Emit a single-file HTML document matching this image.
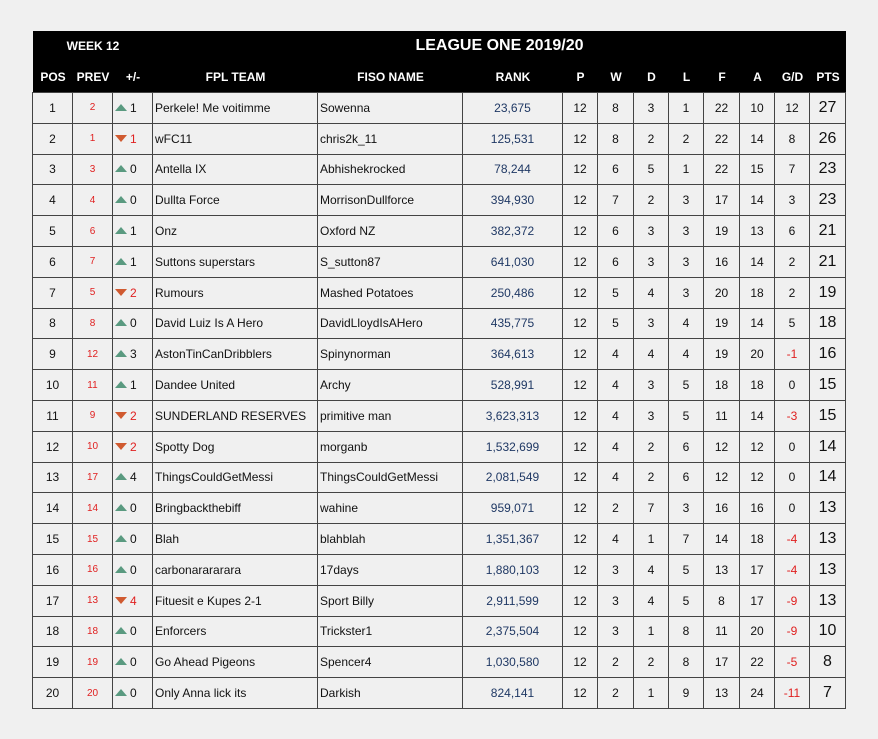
<!DOCTYPE html>
<html><head><meta charset="utf-8"><style>
html,body{margin:0;padding:0;background:#f0f0f0;width:878px;height:739px;overflow:hidden}
body{font-family:"Liberation Sans",Arial,sans-serif;}
.wrap{position:absolute;left:33px;top:31px;width:813px;}
.hd{background:#000;color:#fff;height:61px;position:relative;font-weight:bold;}
.hd div{position:absolute;font-size:12px;text-align:center}
table{border-collapse:collapse;table-layout:fixed;width:814px;position:absolute;left:32px;top:92px}
td{border:1px solid #444;height:29.8px;padding:0;font-size:12px;text-align:center;color:#111;background:#f0f0f0;white-space:nowrap;overflow:hidden}
td.t{text-align:left;padding-left:2px}
td.pr{color:#e02020;font-size:10px}
td.rk{color:#1f3864}
td.pts{font-size:16px}
td.neg{color:#e02020}
.up,.dn{display:inline-block;width:0;height:0;border-left:6px solid transparent;border-right:6px solid transparent;margin-right:3px;vertical-align:1px}
.up{border-bottom:7px solid #5a9a80}
.dn{border-top:7px solid #d05a30}
td.ch{text-align:left;padding-left:2px}
td.ch.r{color:#e02020}
</style></head><body>
<div class="wrap"><div class="hd">
<div style="left:20px;top:8px;width:80px">WEEK 12</div>
<div style="left:350px;top:6px;width:233px;font-size:16px">LEAGUE ONE 2019/20</div>
<div style="left:0;top:39px;width:40px">POS</div>
<div style="left:40px;top:39px;width:40px">PREV</div>
<div style="left:80px;top:39px;width:40px">+/-</div>
<div style="left:120px;top:39px;width:165px">FPL TEAM</div>
<div style="left:285px;top:39px;width:145px">FISO NAME</div>
<div style="left:430px;top:39px;width:100px">RANK</div>
<div style="left:530px;top:39px;width:35px">P</div>
<div style="left:565px;top:39px;width:36px">W</div>
<div style="left:601px;top:39px;width:35px">D</div>
<div style="left:636px;top:39px;width:35px">L</div>
<div style="left:671px;top:39px;width:36px">F</div>
<div style="left:707px;top:39px;width:35px">A</div>
<div style="left:742px;top:39px;width:35px">G/D</div>
<div style="left:777px;top:39px;width:36px">PTS</div>
</div></div>
<table>
<colgroup><col style="width:40px"><col style="width:40px"><col style="width:40px"><col style="width:165px"><col style="width:145px"><col style="width:100px"><col style="width:35px"><col style="width:36px"><col style="width:35px"><col style="width:35px"><col style="width:36px"><col style="width:35px"><col style="width:35px"><col style="width:36px"></colgroup>
<tbody id="b"></tbody></table>
<script>
var d=[
[1,2,"u",1,"Perkele! Me voitimme","Sowenna","23,675",8,3,1,22,10,12,27],
[2,1,"d",1,"wFC11","chris2k_11","125,531",8,2,2,22,14,8,26],
[3,3,"u",0,"Antella IX","Abhishekrocked","78,244",6,5,1,22,15,7,23],
[4,4,"u",0,"Dullta Force","MorrisonDullforce","394,930",7,2,3,17,14,3,23],
[5,6,"u",1,"Onz","Oxford NZ","382,372",6,3,3,19,13,6,21],
[6,7,"u",1,"Suttons superstars","S_sutton87","641,030",6,3,3,16,14,2,21],
[7,5,"d",2,"Rumours","Mashed Potatoes","250,486",5,4,3,20,18,2,19],
[8,8,"u",0,"David Luiz Is A Hero","DavidLloydIsAHero","435,775",5,3,4,19,14,5,18],
[9,12,"u",3,"AstonTinCanDribblers","Spinynorman","364,613",4,4,4,19,20,-1,16],
[10,11,"u",1,"Dandee United","Archy","528,991",4,3,5,18,18,0,15],
[11,9,"d",2,"SUNDERLAND RESERVES","primitive man","3,623,313",4,3,5,11,14,-3,15],
[12,10,"d",2,"Spotty Dog","morganb","1,532,699",4,2,6,12,12,0,14],
[13,17,"u",4,"ThingsCouldGetMessi","ThingsCouldGetMessi","2,081,549",4,2,6,12,12,0,14],
[14,14,"u",0,"Bringbackthebiff","wahine","959,071",2,7,3,16,16,0,13],
[15,15,"u",0,"Blah","blahblah","1,351,367",4,1,7,14,18,-4,13],
[16,16,"u",0,"carbonarararara","17days","1,880,103",3,4,5,13,17,-4,13],
[17,13,"d",4,"Fituesit e Kupes 2-1","Sport Billy","2,911,599",3,4,5,8,17,-9,13],
[18,18,"u",0,"Enforcers","Trickster1","2,375,504",3,1,8,11,20,-9,10],
[19,19,"u",0,"Go Ahead Pigeons","Spencer4","1,030,580",2,2,8,17,22,-5,8],
[20,20,"u",0,"Only Anna lick its","Darkish","824,141",2,1,9,13,24,-11,7]];
var h="";d.forEach(function(r){h+="<tr><td>"+r[0]+"</td><td class='pr'>"+r[1]+"</td><td class='ch"+(r[2]=="d"?" r":"")+"'><span class='"+(r[2]=="u"?"up":"dn")+"'></span>"+r[3]+"</td><td class='t'>"+r[4]+"</td><td class='t'>"+r[5]+"</td><td class='rk'>"+r[6]+"</td><td>12</td><td>"+r[7]+"</td><td>"+r[8]+"</td><td>"+r[9]+"</td><td>"+r[10]+"</td><td>"+r[11]+"</td><td"+(r[12]<0?" class='neg'":"")+">"+r[12]+"</td><td class='pts'>"+r[13]+"</td></tr>";});
document.getElementById("b").innerHTML=h;
</script>
</body></html>
